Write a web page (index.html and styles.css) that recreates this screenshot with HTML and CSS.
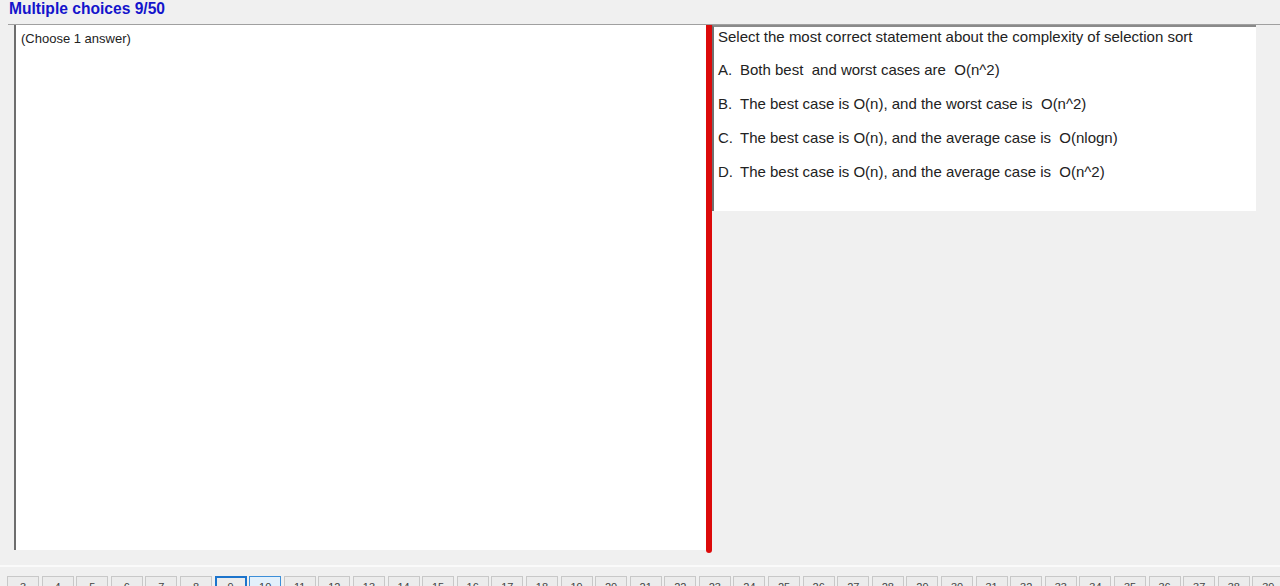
FILE: index.html
```html
<!DOCTYPE html>
<html>
<head>
<meta charset="utf-8">
<link rel="stylesheet" href="styles.css">
</head>
<body>
<div class="title">Multiple choices 9/50</div>
<div class="split">
  <div class="left-panel">
    <div class="hint">(Choose 1 answer)</div>
  </div>
  <div class="divider"></div>
  <div class="right-col">
    <div class="question">
      <div class="q-text">Select the most correct statement about the complexity of selection sort</div>
      <div class="opt"><span class="letter">A.</span>Both best&nbsp; and worst cases are&nbsp; O(n^2)</div>
      <div class="opt"><span class="letter">B.</span>The best case is O(n), and the worst case is&nbsp; O(n^2)</div>
      <div class="opt"><span class="letter">C.</span>The best case is O(n), and the average case is&nbsp; O(nlogn)</div>
      <div class="opt"><span class="letter">D.</span>The best case is O(n), and the average case is&nbsp; O(n^2)</div>
    </div>
  </div>
</div>
<div class="sep"></div>
<div class="pager">
  <span class="pg">3</span><span class="pg">4</span><span class="pg">5</span><span class="pg">6</span><span class="pg">7</span><span class="pg">8</span><span class="pg current">9</span><span class="pg hover">10</span><span class="pg">11</span><span class="pg">12</span><span class="pg">13</span><span class="pg">14</span><span class="pg">15</span><span class="pg">16</span><span class="pg">17</span><span class="pg">18</span><span class="pg">19</span><span class="pg">20</span><span class="pg">21</span><span class="pg">22</span><span class="pg">23</span><span class="pg">24</span><span class="pg">25</span><span class="pg">26</span><span class="pg">27</span><span class="pg">28</span><span class="pg">29</span><span class="pg">30</span><span class="pg">31</span><span class="pg">32</span><span class="pg">33</span><span class="pg">34</span><span class="pg">35</span><span class="pg">36</span><span class="pg">37</span><span class="pg">38</span><span class="pg">39</span>
</div>
</body>
</html>
```
FILE: styles.css
```css
html, body {
  margin: 0;
  padding: 0;
  background: #f0f0f0;
  font-family: "Liberation Sans", Arial, sans-serif;
  overflow: hidden;
  height: 586px;
}
.title {
  height: 24px;
  box-sizing: border-box;
  padding: 0 0 0 9px;
  font-size: 15.6px;
  font-weight: bold;
  color: #1414cc;
  line-height: 18px;
}
.split {
  display: flex;
  height: 525px;
  margin-left: 8px;
  border-top: 1px solid #a0a0a0;
}
.left-panel {
  width: 690px;
  margin-left: 6px;
  background: #ffffff;
  border-left: 2px solid #6e6e6e;
  box-sizing: content-box;
}
.hint {
  font-size: 13px;
  color: #222;
  padding: 6px 0 0 5px;
  line-height: 16px;
}
.divider {
  width: 6px;
  background: #dc0a0a;
  border-radius: 0 0 3px 3px;
  margin-bottom: -3px;
}
.right-col {
  flex: 1;
  display: flex;
  align-items: flex-start;
}
.question {
  width: 544px;
  height: 186px;
  box-sizing: border-box;
  background: #ffffff;
  border-left: 2px solid #707070;
  border-top: 2px solid #8a8a8a;
  padding: 0 0 0 4px;
  color: #222;
  font-size: 15px;
}
.q-text {
  line-height: 20px;
  margin-bottom: 6px;
}
.opt {
  height: 34px;
  line-height: 34px;
  white-space: nowrap;
}
.letter {
  display: inline-block;
  width: 22px;
}
.sep {
  height: 15px;
  border-bottom: 2px solid #fafafa;
}
.pager {
  display: flex;
  gap: 2.6px;
  padding: 9px 0 0 7px;
  white-space: nowrap;
}
.pg {
  flex: none;
  width: 30px;
  height: 24px;
  border: 1px solid #c8c8c8;
  background: #ececec;
  font-size: 11px;
  color: #444;
  text-align: center;
  line-height: 20px;
}
.pg.current {
  border: 2px solid #1c74cc;
  width: 28px;
  height: 22px;
  line-height: 18px;
}
.pg.hover {
  border-color: #3c8ed8;
  background: #e3f0fb;
}
```
